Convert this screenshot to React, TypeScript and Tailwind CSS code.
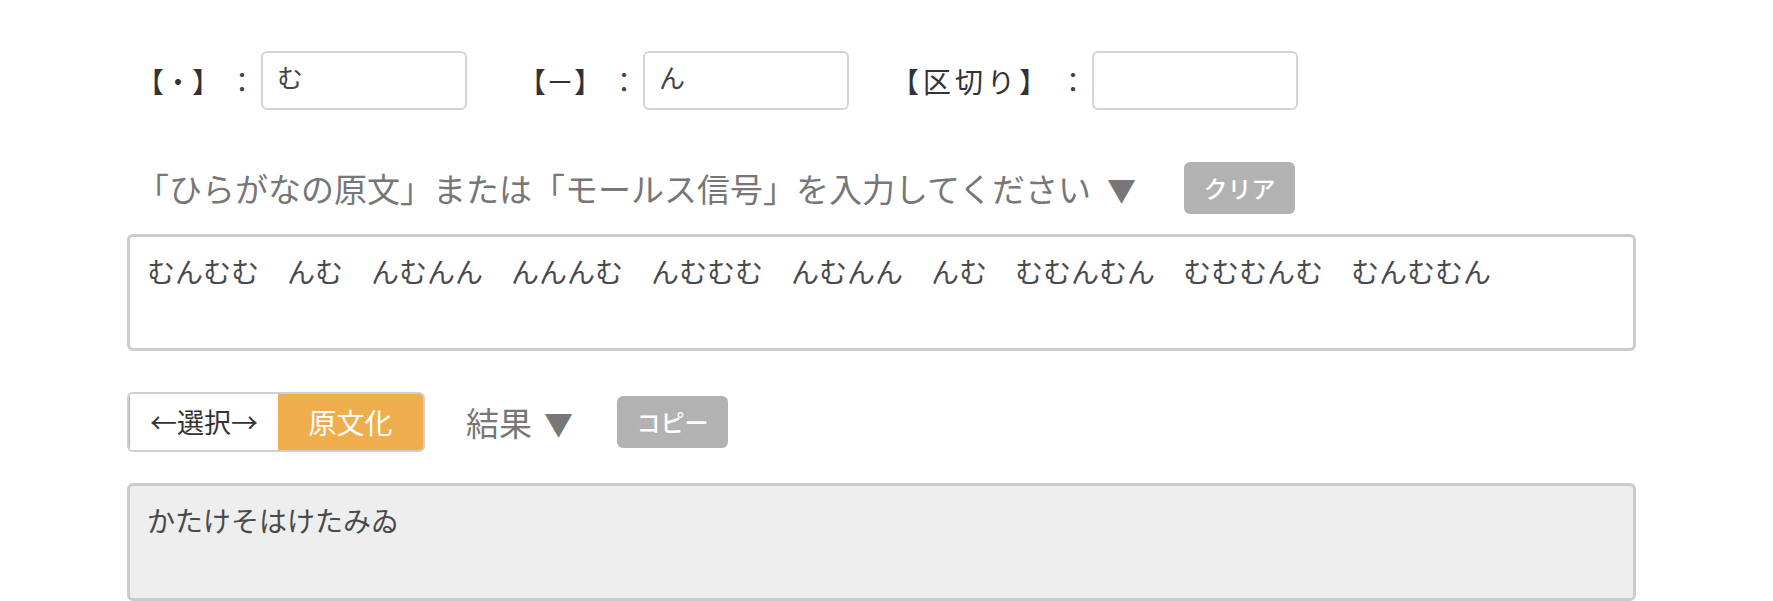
import React from 'react';

const jp = "font-['Noto_Sans_CJK_JP','Noto_Sans',sans-serif]";

function Field({
  label,
  value,
  className,
  labelClass,
}: {
  label: string;
  value: string;
  className?: string;
  labelClass?: string;
}) {
  return (
    <div className={`flex items-center ${className ?? ''}`}>
      <span className={`text-[28px] text-[#333] leading-none ${labelClass ?? ''}`}>{label}</span>
      <span className="ml-2 w-[28px] text-center text-[28px] text-[#444] leading-none">：</span>
      <input
        readOnly
        value={value}
        className="ml-[5px] h-[59px] w-[206px] rounded-md border-2 border-[#d4d4d4] bg-white px-[14px] pb-2 text-[26px] text-[#444] outline-none"
      />
    </div>
  );
}

function GrayButton({ children }: { children: React.ReactNode }) {
  return (
    <button className="flex h-[52px] w-[111px] items-center justify-center rounded-md bg-[#b2b2b2] text-[24px] font-medium text-white">
      {children}
    </button>
  );
}

export default function App() {
  const morse =
    'むんむむ　んむ　んむんん　んんんむ　んむむむ　んむんん　んむ　むむんむん　むむむんむ　むんむむん';

  return (
    <div className={`min-h-screen bg-white ${jp}`}>
      <div className="ml-[127px] w-[1509px] pt-[51px]">
        {/* symbol settings */}
        <div className="flex h-[59px] items-center pl-[9px]">
          <Field label="【・】" value="む" />
          <Field label="【－】" value="ん" className="ml-[51px]" />
          <Field label="【区切り】" value="" className="ml-[42px]" labelClass="tracking-[4px]" />
        </div>

        {/* input heading */}
        <div className="mt-[52px] flex h-[52px] items-center pl-[9px]">
          <span className="text-[33px] leading-none text-[#777]">
            「ひらがなの原文」または「モールス信号」を入力してください
            <span className="ml-[16px] inline-block text-[29px]">▼</span>
          </span>
          <div className="ml-[48px]">
            <GrayButton>クリア</GrayButton>
          </div>
        </div>

        <textarea
          readOnly
          defaultValue={morse}
          className="mt-5 block h-[117px] w-full resize-none rounded-md border-[3px] border-[#cbcbcb] bg-white px-[17px] pt-[14px] pb-[10px] text-[28px] leading-[1.45] text-[#4a4a4a] outline-none"
        />

        {/* mode + result heading */}
        <div className="mt-[41px] flex h-[60px] items-center">
          <div className="flex h-[60px] w-[298px] overflow-hidden rounded-md border-2 border-[#cfcfcf]">
            <span className="flex w-[149px] items-center justify-center border-l border-l-[#7fc4e8] bg-white text-[27px] text-[#333]">
              ←選択→
            </span>
            <span className="flex flex-1 items-center justify-center bg-[#f0ad4e] text-[28px] text-white">
              原文化
            </span>
          </div>
          <span className="ml-[41px] text-[33px] leading-none text-[#777]">
            結果<span className="ml-[12px] inline-block text-[29px]">▼</span>
          </span>
          <div className="ml-[44px]">
            <GrayButton>コピー</GrayButton>
          </div>
        </div>

        <textarea
          readOnly
          defaultValue="かたけそはけたみゐ"
          className="mt-[31px] block h-[118px] w-full resize-none rounded-md border-[3px] border-[#cbcbcb] bg-[#eeeeee] px-[17px] pt-[14px] pb-[10px] text-[28px] leading-[1.45] text-[#4a4a4a] outline-none"
        />
      </div>
    </div>
  );
}
